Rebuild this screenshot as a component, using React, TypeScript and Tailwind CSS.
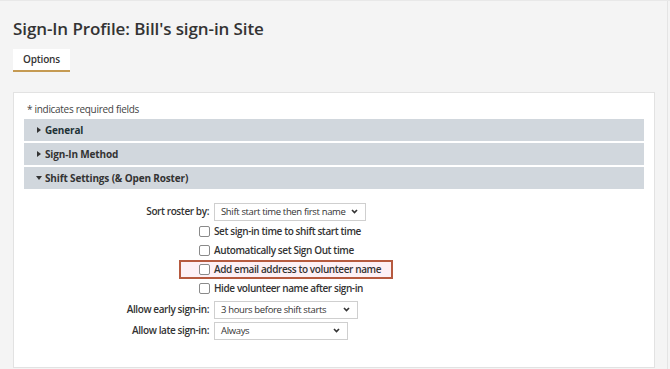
import React from "react";

const Chevron = () => (
  <svg width="7" height="5" viewBox="0 0 7 5" className="shrink-0">
    <path d="M1 1 L3.5 3.6 L6 1" fill="none" stroke="#333" strokeWidth="1.6" />
  </svg>
);

const Select = ({ value, width }: { value: string; width: string }) => (
  <div
    className={`${width} h-[18px] border border-[#cfcfcf] bg-white flex items-center justify-between pl-[6px] pr-[7px] text-[9.5px] tracking-[-0.35px] text-[#333] whitespace-nowrap`}
  >
    <span className="leading-none">{value}</span>
    <Chevron />
  </div>
);

const TriRight = () => (
  <svg width="4" height="6" viewBox="0 0 4 6" className="shrink-0">
    <path d="M0 0 L4 3 L0 6 Z" fill="#333" />
  </svg>
);
const TriDown = () => (
  <svg width="6" height="4" viewBox="0 0 6 4" className="shrink-0">
    <path d="M0 0 L6 0 L3 4 Z" fill="#333" />
  </svg>
);

const Box = () => (
  <div className="w-[11px] h-[11px] border border-[#8a8a8a] rounded-[2px] bg-white" />
);

const CheckRow = ({ label, highlight }: { label: string; highlight?: boolean }) => (
  <div className="relative flex items-center h-[19px]">
    {highlight && (
      <div className="absolute left-[165px] top-0 w-[214px] h-[19px] border-2 border-[#b65a3f] bg-[#fdf0f5]" />
    )}
    <div className="relative w-[196px] flex justify-end">
      <Box />
    </div>
    <span className="relative ml-[4px] text-[10px] tracking-[-0.4px] font-semibold text-[#333] whitespace-nowrap">
      {label}
    </span>
  </div>
);

const SelectRow = ({ label, value, width }: { label: string; value: string; width: string }) => (
  <div className="flex items-center h-[21px]">
    <div className="w-[195px] text-right text-[10px] tracking-[-0.4px] font-semibold text-[#333] whitespace-nowrap">
      {label}
    </div>
    <div className="ml-[5px]">
      <Select value={value} width={width} />
    </div>
  </div>
);

const AccRow = ({ title, open, dark }: { title: string; open?: boolean; dark?: boolean }) => (
  <div className="h-[22px] bg-[#d1d7dd] flex items-center pl-[12px] gap-[3px]">
    <div className="w-[6px] flex justify-center">{open ? <TriDown /> : <TriRight />}</div>
    <span className={`text-[10px] tracking-[-0.15px] font-bold ${dark ? "text-[#1e3236]" : "text-[#333]"}`}>
      {title}
    </span>
  </div>
);

export default function App() {
  return (
    <div
      className="w-[670px] h-[369px] bg-[#f4f4f4] border-t border-[#e8e8e8] overflow-hidden flex"
      style={{ fontFamily: "'Open Sans', 'Liberation Sans', sans-serif" }}
    >
      <div className="w-[668px] border-r border-[#e4e4e4] pl-[13px] flex flex-col">
        <h1 className="mt-[16px] text-[17px] font-semibold text-[#333] leading-[24px] tracking-[-0.1px]">
          Sign-In Profile: Bill's sign-in Site
        </h1>
        <div className="mt-[8px] w-[57px] h-[23px] bg-white border-b-2 border-[#c59a52] flex items-center justify-center">
          <span className="text-[10px] tracking-[-0.2px] font-semibold text-[#333]">Options</span>
        </div>
        <div className="mt-[20px] w-[642px] h-[276px] bg-white border border-[#e2e2e2] flex flex-col">
          <div className="pl-[13px] pt-[9px] text-[10px] tracking-[-0.3px] text-[#444] leading-[15px]">
            * indicates required fields
          </div>
          <div className="pl-[10px] pr-[10px] mt-[2px] flex flex-col gap-[2px]">
            <AccRow title="General" dark />
            <AccRow title="Sign-In Method" />
            <AccRow title="Shift Settings (& Open Roster)" open />
          </div>
          <div className="mt-[12px] flex flex-col">
            <SelectRow label="Sort roster by:" value="Shift start time then first name" width="w-[152px]" />
            <div className="flex flex-col">
              <CheckRow label="Set sign-in time to shift start time" />
              <CheckRow label="Automatically set Sign Out time" />
              <CheckRow label="Add email address to volunteer name" highlight />
              <CheckRow label="Hide volunteer name after sign-in" />
            </div>
            <div className="mt-[1px]">
              <SelectRow label="Allow early sign-in:" value="3 hours before shift starts" width="w-[144px]" />
              <SelectRow label="Allow late sign-in:" value="Always" width="w-[134px]" />
            </div>
          </div>
        </div>
      </div>
    </div>
  );
}
